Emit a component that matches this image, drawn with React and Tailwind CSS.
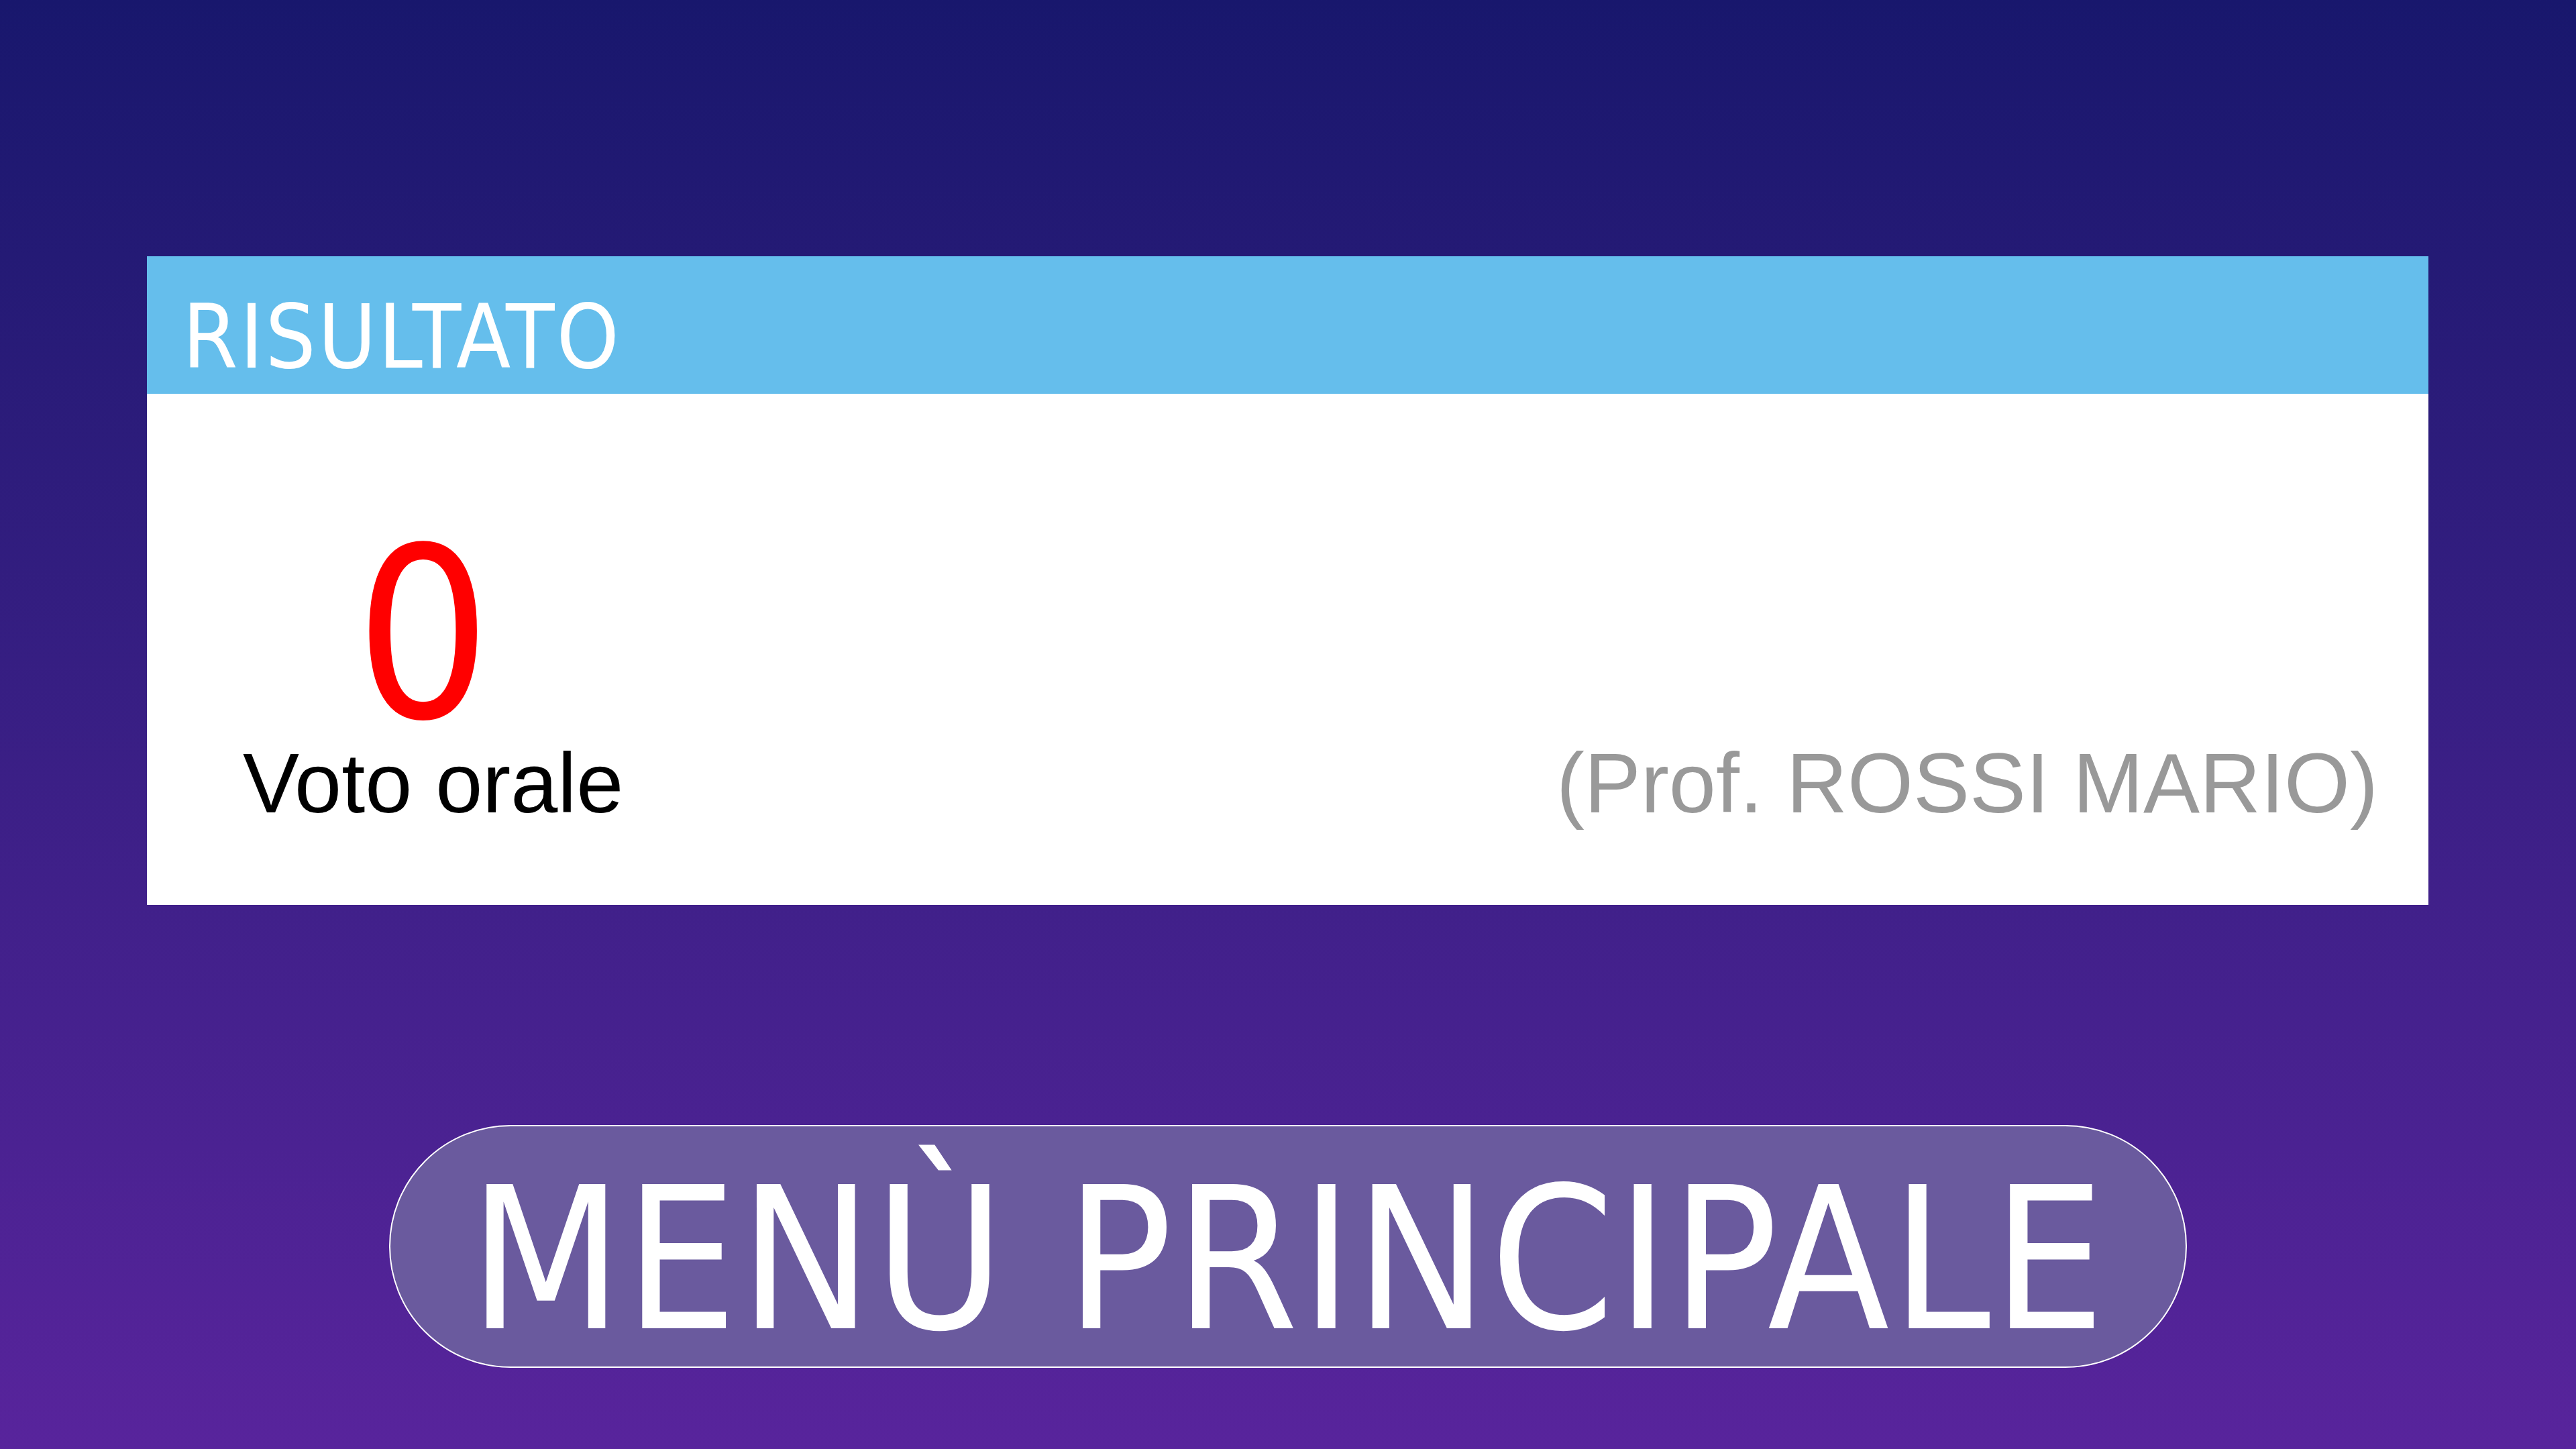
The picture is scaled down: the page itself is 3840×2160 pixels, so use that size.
export default function App() {
  return (
    <div className="w-full h-[2160px] bg-linear-to-b from-[#18176D] to-[#58249C] flex flex-col overflow-hidden">
      {/* Scheda risultato */}
      <div className="mt-[382px] ml-[219px] w-[3401px] flex flex-col">
        <div
          className="h-[205px] bg-[#65BEEC] pl-[53px] pt-[54px] text-white text-[132px] leading-none tracking-[3px] font-stretch-condensed"
          style={{ fontFamily: '"DejaVu Sans Condensed", "DejaVu Sans", sans-serif' }}
        >
          RISULTATO
        </div>
        <div className="h-[762px] bg-white flex justify-between items-end pb-[118px] pl-[143px] pr-[75px]">
          <div className="flex flex-col items-center">
            <div
              className="text-[354px] leading-[260px] text-[#FF0000] mr-[30px] font-stretch-condensed"
              style={{ fontFamily: '"DejaVu Sans Condensed", "DejaVu Sans", sans-serif' }}
            >
              0
            </div>
            <div
              className="mt-[29px] text-[126px] leading-none text-black"
              style={{ fontFamily: '"Liberation Sans", Arial, sans-serif' }}
            >
              Voto orale
            </div>
          </div>
          <div
            className="text-[126px] leading-none text-[#999999]"
            style={{ fontFamily: '"Liberation Sans", Arial, sans-serif' }}
          >
            (Prof. ROSSI MARIO)
          </div>
        </div>
      </div>

      {/* Pulsante menù */}
      <button className="mt-[328px] mx-auto w-[2680px] h-[362px] rounded-full border-2 border-white bg-[#6A5A9E] flex items-center justify-center pt-[40px]">
        <span
          className="text-white text-[295px] leading-none tracking-[3px] font-stretch-condensed"
          style={{ fontFamily: '"DejaVu Sans Condensed", "DejaVu Sans", sans-serif' }}
        >
          MENÙ PRINCIPALE
        </span>
      </button>
    </div>
  );
}
